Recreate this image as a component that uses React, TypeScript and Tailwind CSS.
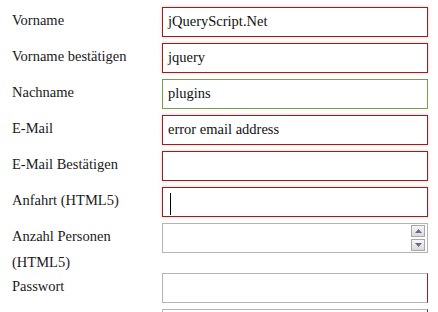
import React from "react";

const red = "border border-[#8c2424] shadow-[0_0_3px_rgba(220,60,60,0.35)]";
const green = "border border-[#74a24a]";
const gray = "border border-[#b4b4b4]";

function Field({ cls, children }: { cls: string; children?: React.ReactNode }) {
  return (
    <div className={`ml-auto w-[266px] h-[30px] bg-white flex items-center pl-[5px] pr-[2px] text-[14.5px] text-[#111] ${cls}`}>
      {children}
    </div>
  );
}

function Row({ label, h = "h-[30px]", children }: { label: React.ReactNode; h?: string; children: React.ReactNode }) {
  return (
    <div className={`flex items-start ${h}`}>
      <div className="w-[150px] pl-3 text-[14.5px] leading-[26px] text-[#1a1a1a]">{label}</div>
      <div className="flex-1 pr-[10px] flex">{children}</div>
    </div>
  );
}

function Spinner() {
  return (
    <div className="ml-auto flex flex-col gap-[2px]">
      {[0, 1].map((i) => (
        <div
          key={i}
          className="w-[14px] h-[12px] border border-[#a8a8a8] bg-gradient-to-b from-[#f7f7f7] to-[#dadada] flex items-center justify-center"
        >
          <svg width="7" height="4" viewBox="0 0 7 4">
            {i === 0 ? (
              <polygon points="0,4 7,4 3.5,0" fill="#5f6f8f" />
            ) : (
              <polygon points="0,0 7,0 3.5,4" fill="#5f6f8f" />
            )}
          </svg>
        </div>
      ))}
    </div>
  );
}

export default function App() {
  return (
    <div
      className="w-[438px] h-[312px] overflow-hidden bg-white pt-[7px] flex flex-col gap-[6px]"
      style={{ fontFamily: '"Liberation Serif", "Times New Roman", serif' }}
    >
      <Row label="Vorname">
        <Field cls={red}>jQueryScript.Net</Field>
      </Row>
      <Row label="Vorname bestätigen">
        <Field cls={red}>jquery</Field>
      </Row>
      <Row label="Nachname">
        <Field cls={green}>plugins</Field>
      </Row>
      <Row label="E-Mail">
        <Field cls={red}>error email address</Field>
      </Row>
      <Row label="E-Mail Bestätigen">
        <Field cls={red} />
      </Row>
      <Row label="Anfahrt (HTML5)">
        <Field cls={red}>
          <div className="ml-[2px] w-[1px] h-[22px] bg-black mt-[3px]" />
        </Field>
      </Row>
      <Row label={<>Anzahl Personen<br />(HTML5)</>} h="h-[44px]">
        <Field cls={gray}>
          <Spinner />
        </Field>
      </Row>
      <Row label="Passwort">
        <Field cls={`${gray} border-r-[#8c2424]`} />
      </Row>
      <Row label="">
        <Field cls={`${gray} border-r-[#8c2424]`} />
      </Row>
    </div>
  );
}
